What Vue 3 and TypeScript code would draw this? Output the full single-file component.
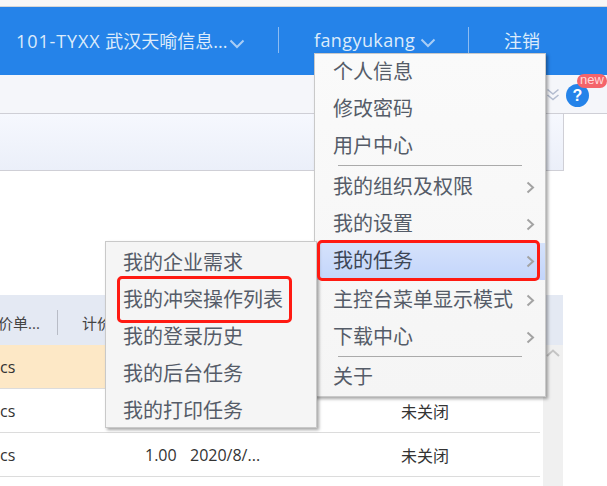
<script setup lang="ts">
interface MenuItem { label: string; arrow?: boolean; active?: boolean; sep?: boolean }
const mainItems: MenuItem[] = [
  { label: '个人信息' }, { label: '修改密码' }, { label: '用户中心' },
  { label: '', sep: true },
  { label: '我的组织及权限', arrow: true }, { label: '我的设置', arrow: true },
  { label: '我的任务', arrow: true, active: true },
  { label: '主控台菜单显示模式', arrow: true }, { label: '下载中心', arrow: true },
  { label: '', sep: true },
  { label: '关于' },
]
const subItems = ['我的企业需求', '我的冲突操作列表', '我的登录历史', '我的后台任务', '我的打印任务']
const rows = [
  { unit: 'cs', qty: '', date: '', state: '', cls: 'hl' },
  { unit: 'cs', qty: '', date: '', state: '未关闭', cls: '' },
  { unit: 'cs', qty: '1.00', date: '2020/8/...', state: '未关闭', cls: '' },
]
</script>

<template>
  <div class="page">
    <div class="strip"></div>
    <header class="top">
      <div class="org"><span class="code">101-TYXX</span> 武汉天喻信息...<svg class="chev" width="16" height="10" viewBox="0 0 16 10"><path d="M1.500 1.500 8 8l6.500-6.500" fill="none" stroke="#a9cdf5" stroke-width="2"/></svg></div>
      <div class="vsep"></div>
      <div class="user"><span class="uname">fangyukang</span><svg class="chev" width="16" height="10" viewBox="0 0 16 10"><path d="M1.500 1.500 8 8l6.500-6.500" fill="none" stroke="#a9cdf5" stroke-width="2"/></svg></div>
      <div class="vsep"></div>
      <div class="logout">注销</div>
    </header>
    <div class="subbar">
      <svg class="dbl" width="14" height="14" viewBox="0 0 14 14"><path d="M1.500 1.500 7 6l5.500-4.500M1.500 7 7 11.500 12.500 7" fill="none" stroke="#b4bdd0" stroke-width="1.600"/></svg>
      <span class="help">?<span class="new">new</span></span>
    </div>
    <div class="panel"></div>
    <div class="table">
      <div class="thead">
        <span class="th1">价单...</span><i class="thsep"></i><span class="th2">计价</span>
      </div>
      <div class="tbody">
        <div class="rows">
          <div v-for="(r, i) in rows" :key="i" class="row" :class="r.cls">
            <span class="unit">{{ r.unit }}</span>
            <span class="qty">{{ r.qty }}</span>
            <span class="date">{{ r.date }}</span>
            <span class="state">{{ r.state }}</span>
          </div>
        </div>
        <div class="scroll">
          <svg width="16" height="10" viewBox="0 0 16 10"><path d="M2 8 8 2.500 14 8" fill="none" stroke="#c4c4c4" stroke-width="2"/></svg>
        </div>
      </div>
    </div>

    <div class="menu main">
      <template v-for="(m, i) in mainItems" :key="i">
        <div v-if="m.sep" class="msep"></div>
        <div v-else class="mi" :class="{ active: m.active }">
          {{ m.label }}
          <svg v-if="m.arrow" class="arrow" width="9" height="13" viewBox="0 0 9 13"><path d="M1.500 1.500 7 6.500l-5.500 5" fill="none" stroke="#a3a3a3" stroke-width="2"/></svg>
        </div>
      </template>
    </div>
    <div class="menu sub">
      <div v-for="s in subItems" :key="s" class="mi">{{ s }}</div>
    </div>
    <div class="mark mark1"></div>
    <div class="mark mark2"></div>
  </div>
</template>

<style>
html, body { margin: 0; background: #fff; overflow: hidden; }
</style>

<style scoped>
.page {
  position: relative;
  width: 607px;
  height: 486px;
  overflow: hidden;
  background: #fff;
  font-family: "Open Sans", "Noto Sans CJK SC", sans-serif;
  color: #444;
}
.strip { height: 6px; background: #f7f7f7; border-bottom: 1px solid #d6d6d6; }
.top {
  height: 68px;
  background: #2583e9;
  display: flex;
  align-items: center;
  color: #dcebfb;
  font-size: 18px;
  box-sizing: border-box;
}
.org { width: 278px; padding-left: 16px; box-sizing: border-box; white-space: nowrap; margin-top: -3px; }
.code { letter-spacing: 0.9px; }
.uname { letter-spacing: 0.4px; }
.vsep { width: 1px; height: 26px; background: #8dbcf2; margin-top: -3px; }
.user { width: 189px; padding-left: 35px; box-sizing: border-box; white-space: nowrap; margin-top: -3px; }
.logout { padding-left: 35px; margin-top: -3px; }
.chev { margin-left: 1px; vertical-align: -1px; }
.user .chev { margin-left: 5px; }
.subbar {
  height: 38px;
  background: #f5f6fa;
  border-bottom: 1px solid #cfcfd6;
  display: flex;
  align-items: center;
  justify-content: flex-end;
  padding-right: 18px;
  gap: 6px;
  box-sizing: content-box;
}
.dbl { margin-top: 2px; }
.help {
  position: relative;
  width: 23px;
  height: 23px;
  margin-top: 2px;
  border-radius: 50%;
  background: #2583e9;
  color: #fff;
  font: bold 16px/23px "Liberation Sans", sans-serif;
  text-align: center;
}
.new {
  position: absolute;
  left: 11px;
  top: -10px;
  width: 30px;
  height: 14px;
  border-radius: 7px;
  background: #f4646a;
  color: #ffd9da;
  font: 13px/12px "Liberation Sans", sans-serif;
}
.panel {
  width: 564px;
  height: 57px;
  box-sizing: border-box;
  background: linear-gradient(#f6f8fe, #ebeff9);
  border-right: 1px solid #cfcfd6;
  border-bottom: 1px solid #cfcfd6;
}
.table { margin-top: 124px; width: 563px; font-size: 16px; color: #333; }
.thead {
  height: 50px;
  box-sizing: border-box;
  padding-top: 4px;
  background: #e4e9f3;
  display: flex;
  align-items: center;
  white-space: nowrap;
  color: #444;
  font-size: 15px;
}
.th1 { margin-left: -2px; width: 59px; }
.thsep { width: 1px; height: 25px; background: #b8bcc6; }
.th2 { margin-left: 24px; }
.tbody { display: flex; }
.rows { width: 540px; }
.row {
  height: 43px;
  display: flex;
  align-items: center;
  border-bottom: 1px solid #dcdcdc;
  background: #fff;
  box-sizing: content-box;
}
.row.hl { background: #fde8c6; }
.unit { width: 145px; }
.qty { width: 45px; }
.date { width: 211px; }
.state { width: 80px; }
.scroll {
  width: 20px;
  margin-left: 3px;
  height: 141px;
  background: #f0f0f0;
  display: flex;
  justify-content: center;
  align-items: flex-start;
  padding-top: 3px;
  box-sizing: border-box;
}
.menu {
  position: absolute;
  box-sizing: border-box;
  background: #f5f5f5;
  border: 1px solid #c9c9c9;
  box-shadow: 2px 2px 3px rgba(0, 0, 0, 0.35);
  font-size: 20px;
  color: #555c68;
  white-space: nowrap;
}
.main {
  left: 314px;
  top: 53px;
  width: 232px;
  height: 344px;
  background: linear-gradient(#fafafa, #f5f5f5);
}
.sub { left: 105px; top: 241px; width: 212px; height: 187px; padding-top: 3px; }
.sub .mi { padding-left: 17px; }
.mi {
  position: relative;
  height: 37px;
  line-height: 35px;
  padding-left: 18px;
}
.mi.active { background: linear-gradient(#d5e2fb, #c3d5fb); color: #3d4656; margin-bottom: 2px; }
.mi:last-child { margin-top: -1px; }
.sub .mi:last-child { margin-top: 0; }
.msep { height: 1px; margin: 0 23px 3px; background: #aaa; }
.arrow { position: absolute; right: 10px; top: 12px; }
.mark {
  position: absolute;
  box-sizing: border-box;
  border: 3px solid #ff1a12;
  border-radius: 5px;
}
.mark1 { left: 317px; top: 240px; width: 223px; height: 41px; }
.mark2 { left: 117px; top: 276px; width: 175px; height: 47px; }
</style>
